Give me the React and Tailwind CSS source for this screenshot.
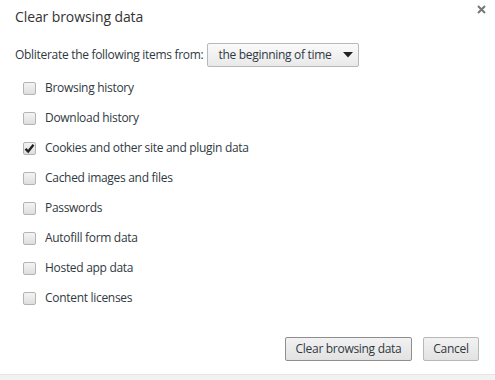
import React from "react";

const items = [
  ["Browsing history", false],
  ["Download history", false],
  ["Cookies and other site and plugin data", true],
  ["Cached images and files", false],
  ["Passwords", false],
  ["Autofill form data", false],
  ["Hosted app data", false],
  ["Content licenses", false],
];

function Box({ checked }) {
  return (
    <span className="w-[13px] h-[13px] rounded-[2px] border border-[#b4b4b4] bg-gradient-to-b from-[#f4f4f4] to-[#dedede] flex items-center justify-center shrink-0">
      {checked && (
        <svg width="11" height="11" viewBox="0 0 11 11">
          <path d="M1.5 5.8 L4.2 8.5 L9.5 1.8" fill="none" stroke="#222" strokeWidth="2.4" />
        </svg>
      )}
    </span>
  );
}

export default function App() {
  return (
    <div
      className="w-[495px] h-[380px] bg-white flex flex-col text-[#303942] relative"
      style={{ fontFamily: '"Open Sans", "Noto Sans", sans-serif' }}
    >
      <button className="absolute right-[7px] top-[2px] w-[14px] h-[14px] flex items-center justify-center">
        <svg width="9" height="9" viewBox="0 0 9 9">
          <path d="M1 1 L8 8 M8 1 L1 8" stroke="#777" strokeWidth="2" />
        </svg>
      </button>
      <div className="flex-1 flex flex-col px-[15px]">
        <h1 className="mt-[7px] text-[14px] leading-[20px] text-[#333] tracking-[-0.1px]">Clear browsing data</h1>
        <div className="mt-[16px] flex items-center h-[24px] text-[12px] tracking-[-0.3px]">
          <span>Obliterate the following items from:</span>
          <div className="ml-[4px] w-[152px] h-[24px] border border-[#b8b8b8] rounded-[2px] bg-gradient-to-b from-[#fafafa] to-[#e9e9e9] flex items-center pl-[10px] pr-[5px] justify-between">
            <span>the beginning of time</span>
            <svg width="10" height="6" viewBox="0 0 10 6">
              <path d="M0 0 L10 0 L5 5.5 Z" fill="#222" />
            </svg>
          </div>
        </div>
        <div className="mt-[6px] flex flex-col pl-[8px]">
          {items.map(([label, checked]) => (
            <div key={label} className="h-[30px] flex items-center gap-[9px] text-[12px] tracking-[-0.3px]">
              <Box checked={checked} />
              <span>{label}</span>
            </div>
          ))}
        </div>
        <div className="mt-auto mb-[13px] flex justify-end gap-[11px] pr-[1px]">
          <button className="w-[127px] h-[24px] border border-[#8e8e8e] rounded-[2px] bg-gradient-to-b from-[#f2f2f2] to-[#e2e2e2] text-[12px] tracking-[-0.3px] text-[#303942]">
            Clear browsing data
          </button>
          <button className="w-[56px] h-[24px] border border-[#b8b8b8] rounded-[2px] bg-gradient-to-b from-[#f2f2f2] to-[#e2e2e2] text-[12px] tracking-[-0.3px] text-[#303942]">
            Cancel
          </button>
        </div>
      </div>
      <div className="h-[6px] bg-[#f2f2f2] border-t border-[#e4e4e4]" />
    </div>
  );
}
